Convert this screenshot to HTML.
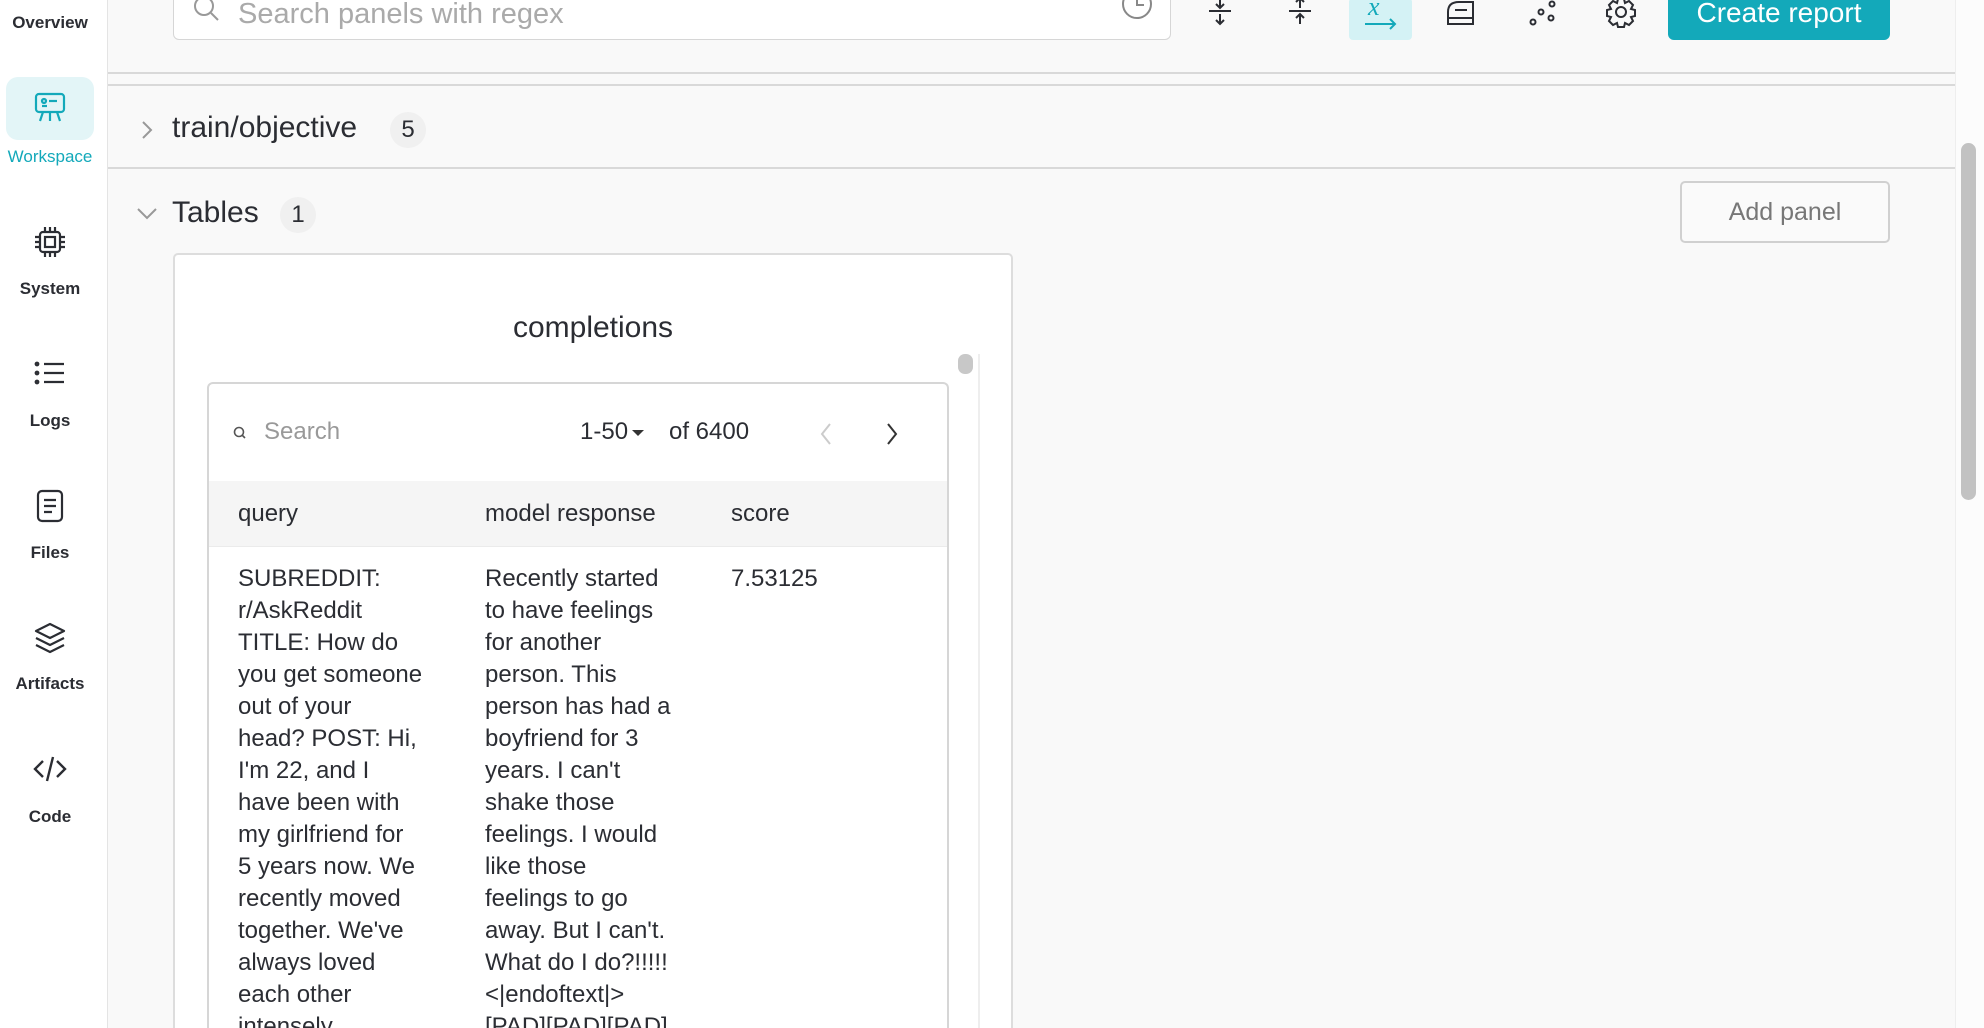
<!DOCTYPE html>
<html style="overflow:hidden;width:1984px;height:1028px"><head><meta charset="utf-8"><style>
*{box-sizing:border-box;margin:0;padding:0}
body{width:1984px;height:1028px;overflow:hidden;background:#f9f9f9;font-family:"Liberation Sans",sans-serif;color:#2b2d33;position:relative}
.a{position:absolute}
.side{left:0;top:0;width:108px;height:1028px;background:#fff;border-right:1px solid #e4e4e4}
.lbl{position:absolute;width:100px;left:0;text-align:center;font-size:17px;font-weight:bold;color:#2b2d33}
.ic{position:absolute;left:33px;width:34px;height:34px}
.line{height:2px;background:#d9d9d9;left:108px;width:1847px}
.cell{position:absolute;font-size:24px;line-height:32px;color:#2b2d33;white-space:nowrap}
</style></head><body>
<div class="a side">
<div class="lbl" style="top:13px">Overview</div>
<div class="a" style="left:6px;top:77px;width:88px;height:63px;background:#e3f5f7;border-radius:12px"></div>
<svg class="ic" style="top:90px" viewBox="0 0 34 34" fill="none" stroke="#13a9ba" stroke-width="2.2"><rect x="3" y="4" width="28" height="18" rx="3"/><circle cx="11" cy="11" r="2"/><line x1="16" y1="11" x2="24" y2="11"/><line x1="9" y1="16" x2="14" y2="16"/><line x1="10" y1="22" x2="7" y2="31"/><line x1="24" y1="22" x2="27" y2="31"/><line x1="17" y1="22" x2="17" y2="31"/></svg>
<div class="lbl" style="top:147px;color:#13a9ba;font-weight:normal">Workspace</div>
<svg class="ic" style="top:225px" viewBox="0 0 34 34" fill="none" stroke="#2b2d33" stroke-width="2.2"><rect x="7" y="7" width="20" height="20" rx="3"/><rect x="12" y="12" width="10" height="10"/><path d="M12 2v5M17 2v5M22 2v5M12 27v5M17 27v5M22 27v5M2 12h5M2 17h5M2 22h5M27 12h5M27 17h5M27 22h5"/></svg>
<div class="lbl" style="top:279px">System</div>
<svg class="ic" style="top:356px" viewBox="0 0 34 34" fill="none" stroke="#2b2d33" stroke-width="2.2"><path d="M11 8h20M11 17h20M11 26h20"/><circle cx="4" cy="8" r="1.3"/><circle cx="4" cy="17" r="1.3"/><circle cx="4" cy="26" r="1.3"/></svg>
<div class="lbl" style="top:411px">Logs</div>
<svg class="ic" style="top:489px" viewBox="0 0 34 34" fill="none" stroke="#2b2d33" stroke-width="2.2"><rect x="5" y="2" width="24" height="30" rx="4"/><path d="M11 11h12M11 17h12M11 23h8"/></svg>
<div class="lbl" style="top:543px">Files</div>
<svg class="ic" style="top:621px" viewBox="0 0 34 34" fill="none" stroke="#2b2d33" stroke-width="2.2" stroke-linejoin="round"><path d="M17 3L31 10L17 17L3 10Z"/><path d="M3 17L17 24L31 17"/><path d="M3 24L17 31L31 24"/></svg>
<div class="lbl" style="top:674px">Artifacts</div>
<svg class="ic" style="top:752px" viewBox="0 0 34 34" fill="none" stroke="#2b2d33" stroke-width="2.4"><path d="M10 9L2 17L10 25M24 9L32 17L24 25M20 5L14 29"/></svg>
<div class="lbl" style="top:807px">Code</div>
</div>

<div class="a" style="left:173px;top:-10px;width:998px;height:50px;background:#fff;border:1px solid #d6d6d6;border-radius:6px"></div>
<svg class="a" style="left:192px;top:-4px" width="30" height="30" viewBox="0 0 30 30" fill="none" stroke="#999" stroke-width="2"><circle cx="12" cy="10" r="9"/><path d="M19 17l7 7"/></svg>
<div class="a" style="left:238px;top:-2px;font-size:29px;color:#aaa">Search panels with regex</div>
<svg class="a" style="left:1120px;top:-4px" width="34" height="30" viewBox="0 0 34 30" fill="none" stroke="#888" stroke-width="2"><circle cx="17" cy="8" r="14"/><path d="M17 0v9h7"/></svg>
<svg class="a" style="left:1207px;top:-2px" width="26" height="30" viewBox="0 0 26 30" fill="none" stroke="#2b2d33" stroke-width="2"><path d="M2 13h22M13 0v10M9 6l4 4 4-4M13 16v10M9 22l4 4 4-4"/></svg>
<div class="a" style="left:1349px;top:-2px;width:63px;height:42px;background:#d4f2f5;border-radius:4px"></div>
<svg class="a" style="left:1287px;top:-2px" width="26" height="30" viewBox="0 0 26 30" fill="none" stroke="#2b2d33" stroke-width="2"><path d="M2 13h22M13 0v10M9 4l4-4 4 4M13 16v10M9 20l4-4 4 4"/></svg>
<div class="a" style="left:1368px;top:-8px;font-size:26px;font-style:italic;color:#13a9ba;font-family:'Liberation Serif',serif">x</div>
<svg class="a" style="left:1364px;top:18px" width="34" height="12" viewBox="0 0 34 12" fill="none" stroke="#13a9ba" stroke-width="2"><path d="M1 6h30M26 1l5 5-5 5"/></svg>
<svg class="a" style="left:1445px;top:-2px" width="32" height="30" viewBox="0 0 32 30" fill="none" stroke="#2b2d33" stroke-width="2"><path d="M3 26V14Q3 4 14 4H28V26ZM3 20h25M10 12h12"/></svg>
<svg class="a" style="left:1528px;top:-2px" width="30" height="30" viewBox="0 0 30 30" fill="none" stroke="#2b2d33" stroke-width="2"><circle cx="5" cy="24" r="2.5"/><circle cx="13" cy="14" r="2.5"/><circle cx="23" cy="20" r="2.5"/><circle cx="24" cy="6" r="2.5"/></svg>
<svg class="a" style="left:1605px;top:-4px" width="32" height="32" viewBox="0 0 32 32" fill="none" stroke="#2b2d33" stroke-width="2"><circle cx="16" cy="16" r="5"/><path d="M13 3h6l1 4 4-2 4 4-2 4 4 1v6l-4 1 2 4-4 4-4-2-1 4h-6l-1-4-4 2-4-4 2-4-4-1v-6l4-1-2-4 4-4 4 2z"/></svg>
<div class="a" style="left:1668px;top:-10px;width:222px;height:50px;background:#13a9ba;border-radius:6px;color:#fff;font-size:28px;text-align:center;line-height:46px">Create report</div>

<div class="a line" style="top:72px"></div>
<div class="a line" style="top:84px"></div>
<svg class="a" style="left:139px;top:119px" width="16" height="22" viewBox="0 0 16 22" fill="none" stroke="#999" stroke-width="2"><path d="M4 3l8 8-8 8"/></svg>
<div class="a" style="left:172px;top:111px;font-size:30px">train/objective</div>
<div class="a" style="left:390px;top:112px;width:36px;height:36px;border-radius:18px;background:#f0f0f0;font-size:24px;text-align:center;line-height:36px">5</div>
<div class="a line" style="top:167px"></div>
<svg class="a" style="left:135px;top:205px" width="24" height="16" viewBox="0 0 24 16" fill="none" stroke="#999" stroke-width="2"><path d="M3 4l9 9 9-9"/></svg>
<div class="a" style="left:172px;top:196px;font-size:30px">Tables</div>
<div class="a" style="left:280px;top:197px;width:36px;height:36px;border-radius:18px;background:#f0f0f0;font-size:24px;text-align:center;line-height:36px">1</div>
<div class="a" style="left:1680px;top:181px;width:210px;height:62px;border:2px solid #d0d0d0;border-radius:5px;background:#fafafa;font-size:25px;color:#777;text-align:center;line-height:58px">Add panel</div>

<div class="a" style="left:1955px;top:0;width:29px;height:1028px;background:#fcfcfc;border-left:1px solid #eee"></div>
<div class="a" style="left:1961px;top:143px;width:15px;height:357px;background:#c2c2c2;border-radius:8px"></div>

<div class="a" style="left:173px;top:253px;width:840px;height:775px;background:#fff;border:2px solid #ddd;border-bottom:none;border-radius:5px 5px 0 0"></div>
<div class="a" style="left:173px;top:311px;width:840px;text-align:center;font-size:30px">completions</div>
<div class="a" style="left:978px;top:354px;width:2px;height:674px;background:#eee"></div>
<div class="a" style="left:958px;top:354px;width:15px;height:20px;background:#c8c8c8;border-radius:7px"></div>
<div class="a" style="left:207px;top:382px;width:742px;height:646px;background:#fff;border:2px solid #d6d6d6;border-bottom:none;border-radius:6px 6px 0 0"></div>
<svg class="a" style="left:232px;top:425px" width="16" height="16" viewBox="0 0 16 16" fill="none" stroke="#555" stroke-width="1.6"><circle cx="7" cy="7" r="4.5"/><path d="M10 10l3 3"/></svg>
<div class="a" style="left:264px;top:418px;font-size:24px;color:#999">Search</div>
<div class="a" style="left:580px;top:418px;font-size:24px">1-50</div>
<div class="a" style="left:632px;top:430px;border-left:6px solid transparent;border-right:6px solid transparent;border-top:6px solid #333"></div>
<div class="a" style="left:669px;top:418px;font-size:24px">of 6400</div>
<svg class="a" style="left:818px;top:421px" width="16" height="26" viewBox="0 0 16 26" fill="none" stroke="#ccc" stroke-width="2"><path d="M12 3L4 13l8 10"/></svg>
<svg class="a" style="left:884px;top:421px" width="16" height="26" viewBox="0 0 16 26" fill="none" stroke="#333" stroke-width="2"><path d="M4 3l8 10-8 10"/></svg>
<div class="a" style="left:209px;top:481px;width:738px;height:66px;background:#f5f5f5;border-bottom:1px solid #ebebeb"></div>
<div class="cell" style="left:238px;top:498px">query</div>
<div class="cell" style="left:485px;top:498px">model response</div>
<div class="cell" style="left:731px;top:498px">score</div>
<div class="cell" style="left:238px;top:563px">SUBREDDIT:<br>r/AskReddit<br>TITLE: How do<br>you get someone<br>out of your<br>head? POST: Hi,<br>I'm 22, and I<br>have been with<br>my girlfriend for<br>5 years now. We<br>recently moved<br>together. We've<br>always loved<br>each other<br>intensely.</div>
<div class="cell" style="left:485px;top:563px">Recently started<br>to have feelings<br>for another<br>person. This<br>person has had a<br>boyfriend for 3<br>years. I can't<br>shake those<br>feelings. I would<br>like those<br>feelings to go<br>away. But I can't.<br>What do I do?!!!!!<br>&lt;|endoftext|&gt;<br>[PAD][PAD][PAD]</div>
<div class="cell" style="left:731px;top:563px">7.53125</div>
</body></html>
